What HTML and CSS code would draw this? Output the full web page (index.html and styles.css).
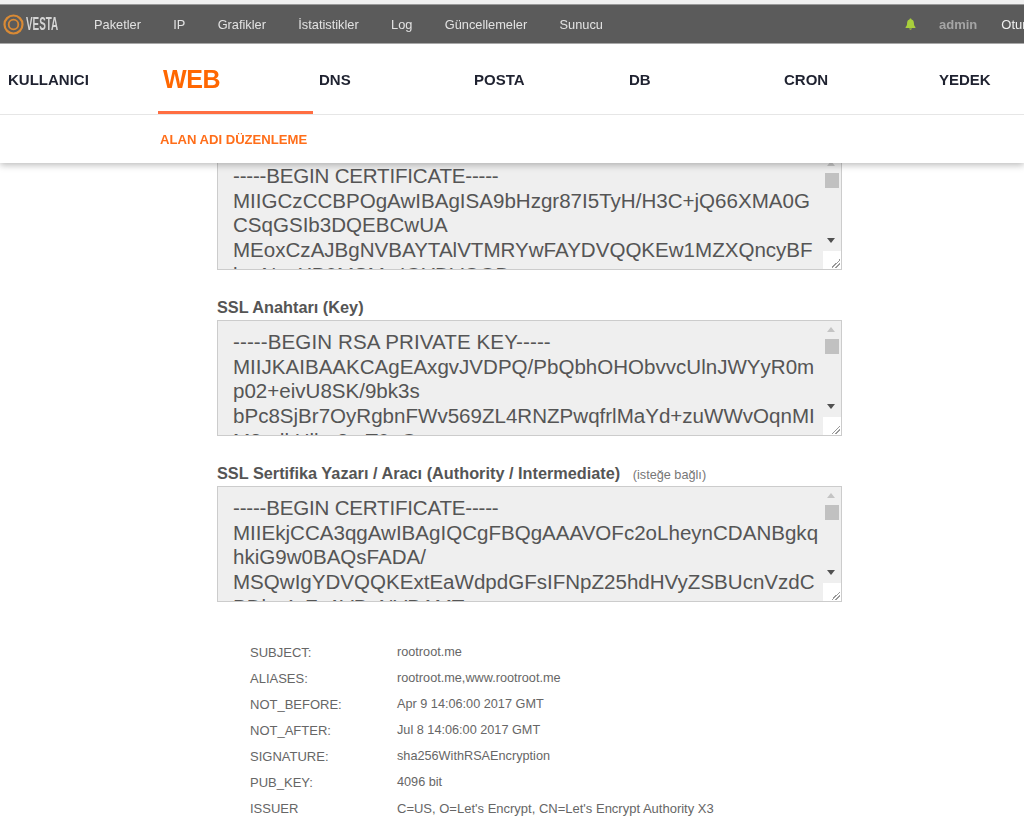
FILE: index.html
```html
<!DOCTYPE html>
<html lang="tr">
<head>
<meta charset="utf-8">
<title>Vesta - Alan adı düzenleme</title>
<link rel="stylesheet" href="styles.css">
</head>
<body>
<header class="header">
  <div class="topbar">
    <a class="logo">
      <svg class="logo-mark" width="21" height="21" viewBox="0 0 21 21" aria-hidden="true">
        <circle cx="10.5" cy="10.5" r="9" fill="none" stroke="#d98a35" stroke-width="2.2"/>
        <circle cx="10.5" cy="10.5" r="4.8" fill="none" stroke="#d98a35" stroke-width="1.8"/>
      </svg>
      <span class="logo-text">VESTA</span>
    </a>
    <nav class="topnav">
      <a>Paketler</a><a>IP</a><a>Grafikler</a><a>İstatistikler</a><a>Log</a><a>Güncellemeler</a><a>Sunucu</a>
    </nav>
    <div class="topright">
      <svg class="bell" width="11" height="12" viewBox="0 0 11 12" aria-hidden="true">
        <path d="M5.5 0.4c.6 0 1 .4 1 1 1.8.4 2.4 1.9 2.4 3.6 0 2 .5 3 1.5 4v.9H.6V9c1-1 1.5-2 1.5-4 0-1.7.6-3.2 2.4-3.6 0-.6.4-1 1-1zM4.1 10.6h2.8c0 .7-.6 1.2-1.4 1.2s-1.4-.5-1.4-1.2z" fill="#a9cf3c"/>
      </svg>
      <a class="user">admin</a>
      <a class="logout">Oturum</a>
    </div>
  </div>
  <nav class="tabs">
    <a class="tab tab-first">KULLANICI</a>
    <a class="tab tab-active">WEB</a>
    <a class="tab">DNS</a>
    <a class="tab">POSTA</a>
    <a class="tab">DB</a>
    <a class="tab">CRON</a>
    <a class="tab">YEDEK</a>
  </nav>
  <div class="subbar"><span class="subtitle">ALAN ADI DÜZENLEME</span></div>
</header>

<main class="main">
  <section class="field">
    <div class="area">
      <div class="area-text">
        <div class="head">-----BEGIN CERTIFICATE-----</div>
        <div>MIIGCzCCBPOgAwIBAgISA9bHzgr87I5TyH/H3C+jQ66XMA0G</div>
        <div>CSqGSIb3DQEBCwUA</div>
        <div>MEoxCzAJBgNVBAYTAlVTMRYwFAYDVQQKEw1MZXQncyBF</div>
        <div>bmNyeXB0MSMwIQYDVQQD</div>
      </div>
      <div class="scroll"><i class="arrow-up"></i><i class="thumb"></i><i class="arrow-down"></i></div>
      <div class="grip"></div>
    </div>
  </section>
  <section class="field">
    <label class="label">SSL Anahtarı (Key)</label>
    <div class="area">
      <div class="area-text">
        <div class="head-wide">-----BEGIN RSA PRIVATE KEY-----</div>
        <div>MIIJKAIBAAKCAgEAxgvJVDPQ/PbQbhOHObvvcUlnJWYyR0m</div>
        <div>p02+eivU8SK/9bk3s</div>
        <div>bPc8SjBr7OyRgbnFWv569ZL4RNZPwqfrlMaYd+zuWWvOqnMI</div>
        <div>M8odkHlbq8mT0pG</div>
      </div>
      <div class="scroll"><i class="arrow-up"></i><i class="thumb"></i><i class="arrow-down"></i></div>
      <div class="grip"></div>
    </div>
  </section>
  <section class="field">
    <label class="label">SSL Sertifika Yazarı / Aracı (Authority / Intermediate) <span class="optional">(isteğe bağlı)</span></label>
    <div class="area">
      <div class="area-text">
        <div class="head">-----BEGIN CERTIFICATE-----</div>
        <div>MIIEkjCCA3qgAwIBAgIQCgFBQgAAAVOFc2oLheynCDANBgkq</div>
        <div>hkiG9w0BAQsFADA/</div>
        <div>MSQwIgYDVQQKExtEaWdpdGFsIFNpZ25hdHVyZSBUcnVzdC</div>
        <div>BDby4xFzAVBgNVBAMT</div>
      </div>
      <div class="scroll"><i class="arrow-up"></i><i class="thumb"></i><i class="arrow-down"></i></div>
      <div class="grip"></div>
    </div>
  </section>
  <table class="cert">
    <tr><td>SUBJECT:</td><td>rootroot.me</td></tr>
    <tr><td>ALIASES:</td><td>rootroot.me,www.rootroot.me</td></tr>
    <tr><td>NOT_BEFORE:</td><td>Apr 9 14:06:00 2017 GMT</td></tr>
    <tr><td>NOT_AFTER:</td><td>Jul 8 14:06:00 2017 GMT</td></tr>
    <tr><td>SIGNATURE:</td><td>sha256WithRSAEncryption</td></tr>
    <tr><td>PUB_KEY:</td><td>4096 bit</td></tr>
    <tr class="issuer"><td>ISSUER</td><td>C=US, O=Let's Encrypt, CN=Let's Encrypt Authority X3</td></tr>
  </table>
</main>
</body>
</html>
```

FILE: styles.css
```css
html, body {
  margin: 0;
  height: 816px;
  overflow: hidden;
  background: #fff;
  font-family: "Liberation Sans", Arial, sans-serif;
}
a { display: block; }

.header {
  position: fixed;
  top: 0;
  left: 0;
  right: 0;
  z-index: 10;
  background: #fff;
  box-shadow: 0 2px 7px rgba(0, 0, 0, .28);
}
.topbar {
  display: flex;
  align-items: center;
  height: 38px;
  margin-top: 4px;
  background: #5b5b5b;
  border-top: 1px solid #9a9a9a;
  border-bottom: 1px solid #a8a8a8;
  overflow: hidden;
  box-shadow: 0 -4px 0 #f0f0f0;
}
.logo {
  display: flex;
  align-items: center;
  width: 94px;
  flex: none;
  padding-left: 3px;
  box-sizing: border-box;
}
.logo-mark { flex: none; }
.logo-text {
  display: inline-block;
  margin-left: 2px;
  font-size: 18px;
  font-weight: bold;
  color: #d4d4d4;
  transform: scaleX(.55);
  transform-origin: left center;
}
.topnav {
  display: flex;
  gap: 32.3px;
  font-size: 12.8px;
  color: #e2e2e2;
}
.topright {
  display: flex;
  align-items: center;
  margin-left: auto;
  width: 115px;
  flex: none;
  font-size: 13px;
}
.bell { flex: none; margin-right: 23px; margin-left: -4px; }
.user { color: #a5a5a5; font-weight: bold; margin-right: 24px; font-size: 13px; }
.logout { color: #f0f0f0; white-space: nowrap; }

.tabs {
  display: flex;
  height: 70px;
  padding-left: 3px;
  border-bottom: 1px solid #e6e6e6;
}
.tab {
  width: 155px;
  flex: none;
  box-sizing: border-box;
  padding: 0 0 0 6px;
  font-size: 15px;
  font-weight: bold;
  line-height: 72px;
  color: #1f2230;
}
.tab-first { padding-left: 5px; }
.tab-active {
  padding-left: 5px;
  font-size: 25px;
  line-height: 70px;
  letter-spacing: -.4px;
  color: #ff6701;
  border-bottom: 3px solid #ff6e42;
  height: 70px;
}
.subbar {
  height: 48px;
  padding-left: 160px;
  display: flex;
  align-items: center;
}
.subtitle {
  font-size: 13.1px;
  font-weight: bold;
  color: #ff6e1a;
}

.main {
  padding: 154px 0 0 217px;
  width: 625px;
}
.label {
  display: block;
  height: 50px;
  line-height: 20px;
  padding-top: 27px;
  box-sizing: border-box;
  font-size: 16.3px;
  font-weight: bold;
  color: #555;
  white-space: nowrap;
}
.optional {
  margin-left: 8px;
  font-size: 12.7px;
  font-weight: normal;
  color: #777;
}
.area {
  position: relative;
  height: 116px;
  box-sizing: border-box;
  background: #efefef;
  border: 1px solid #ccc;
  overflow: hidden;
}
.area-text {
  padding: 9px 0 0 15px;
  font-size: 20.55px;
  line-height: 24.7px;
  color: #555;
  white-space: nowrap;
}
.head { letter-spacing: -.2px; }
.head-wide { letter-spacing: .1px; }
.scroll {
  position: absolute;
  top: 0;
  right: 0;
  width: 18px;
  bottom: 0;
}
.arrow-up, .arrow-down, .thumb { position: absolute; display: block; }
.arrow-up {
  top: 6px;
  left: 4px;
  border: 4px solid transparent;
  border-top: 0;
  border-bottom: 5px solid #c4c4c4;
}
.arrow-down {
  top: 83px;
  left: 4px;
  border: 4px solid transparent;
  border-bottom: 0;
  border-top: 5px solid #505050;
}
.thumb {
  top: 18px;
  left: 2px;
  width: 14px;
  height: 15px;
  background: #c1c1c1;
}
.grip {
  position: absolute;
  right: 0;
  bottom: 0;
  width: 18px;
  height: 18px;
  background:
    linear-gradient(135deg, transparent 50%, #999 50%, #999 58%, transparent 58%, transparent 72%, #999 72%, #999 80%, transparent 80%) right 1px bottom 1px / 9px 9px no-repeat,
    #fff;
}

.cert {
  margin: 37px 0 0 33px;
  border-collapse: collapse;
  font-size: 13px;
  color: #666;
}
.cert td {
  height: 26px;
  padding: 0;
  white-space: nowrap;
}
.cert td:first-child { width: 147px; }
.cert td:last-child { font-size: 12.7px; }
.cert .issuer td:last-child { font-size: 13px; }
```
